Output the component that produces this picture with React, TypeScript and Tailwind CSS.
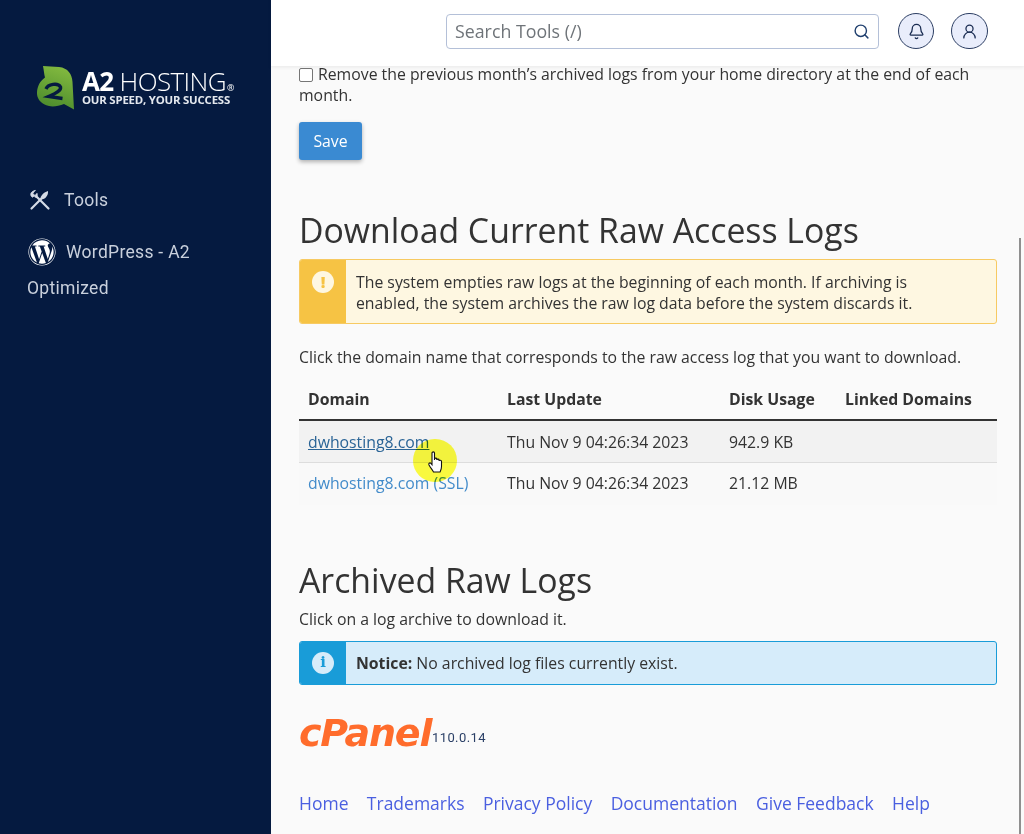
import { Bell, Search, UserRound } from 'lucide-react';
import { FaWordpress } from 'react-icons/fa';

function ToolsIcon() {
  return (
    <svg width="22" height="22" viewBox="0 0 22 22" fill="none" stroke="#d5dbe6" strokeWidth="2.200" strokeLinecap="round">
      {/* screwdriver */}
      <path d="M2.500 19.500L12 10" />
      <path d="M11.500 10.500c-.5-3 2.500-7 7.500-8.500.5 4.500-3 9-7.500 8.500z" fill="#d5dbe6" stroke="none" />
      {/* wrench */}
      <path d="M7.500 7.500L19.500 19.500" />
      <path d="M6 1.500L3.800 4.500l2.200 2-2.700 1.800C.8 6.500 1 2.500 6 1.500zM6 6.500l2-2.200c.6 1.800.3 3.400-.5 4.300L6 8z" fill="#d5dbe6" stroke="#d5dbe6" strokeWidth="0.800" strokeLinejoin="round" />
    </svg>
  );
}

function A2Mark() {
  return (
    <svg width="39" height="44" viewBox="0 0 39 44" className="shrink-0">
      <defs>
        <linearGradient id="a2g" x1="0.6" y1="0" x2="0.3" y2="1">
          <stop offset="0" stopColor="#82b93f" />
          <stop offset="1" stopColor="#4a8a2c" />
        </linearGradient>
      </defs>
      <path
        d="M6 0L22 1C31 2 35 8 35.500 16L37 43.500 27 38C22 40 16 41 12 40 4 38 -0.500 33 0 26 0.500 20 3 15 8 11.500 7 8 7 5 6 0z"
        fill="url(#a2g)"
      />
      <path d="M9 23C11 18 21 16.500 23.500 21 24.500 25 18 27.500 11.500 30.500L25.500 32.500" fill="none" stroke="#051a40" strokeWidth="3.400" />
    </svg>
  );
}

function Sidebar() {
  return (
    <aside className="w-[271px] shrink-0 bg-[#051a40] font-['Roboto',sans-serif] text-[17.500px] text-[#c9d0dc]">
      <div className="mt-[66px] ml-[37px] flex items-start gap-[6px]">
        <A2Mark />
        <div className="font-['Open_Sans',sans-serif] whitespace-nowrap text-white">
          <div className="mt-[4px] flex items-baseline text-[26px] leading-[22px] tracking-[-0.6px]">
            <span className="font-bold">A2</span>
            <span className="ml-[6px] font-light">HOSTING</span>
            <span className="ml-[1px] text-[9px] leading-none">®</span>
          </div>
          <div className="mt-[2px] text-[11.400px] leading-[11px] font-bold tracking-[-0.2px] text-[#e4e8ee]">OUR SPEED, YOUR SUCCESS</div>
        </div>
      </div>
      <div className="mt-[79px] ml-[29px] flex items-center gap-[13px] leading-[22px] tracking-[0.3px]">
        <ToolsIcon />
        <span>Tools</span>
      </div>
      <div className="mt-[27px] ml-[28px] flex items-center gap-[10px] leading-[22px] tracking-[0.3px]">
        <FaWordpress className="text-[28px] text-white" />
        <span>WordPress - A2</span>
      </div>
      <div className="mt-[11px] ml-[27px] leading-[22px] tracking-[0.3px]">Optimized</div>
    </aside>
  );
}

function Header() {
  return (
    <header className="z-10 flex h-[66px] shrink-0 items-center bg-white pb-[4px] pl-[175px] shadow-[0_1px_4px_rgba(0,0,0,0.08)]">
      <div className="flex h-[35px] w-[433px] items-center justify-between rounded-[4px] border border-[#b4c0d8] pr-[8px] pl-[8px]">
        <span className="pt-[1px] text-[17.800px] text-[#6f7479]">Search Tools (/)</span>
        <Search size={17} strokeWidth={2} className="text-[#1f3f6e]" />
      </div>
      <div className="ml-[19px] flex h-[36px] w-[36px] items-center justify-center rounded-full border border-[#2c3e63] bg-[#e9edfb]">
        <Bell size={17} strokeWidth={1.800} className="text-[#1a2c52]" />
      </div>
      <div className="ml-[17px] flex h-[36px] w-[37px] items-center justify-center rounded-full border border-[#2c3e63] bg-[#e9edfb]">
        <UserRound size={17} strokeWidth={1.800} className="text-[#1a2c52]" />
      </div>
    </header>
  );
}

function Alert({ tone, children }: { tone: 'warning' | 'info'; children: React.ReactNode }) {
  const warning = tone === 'warning';
  return (
    <div
      className={
        warning
          ? 'flex h-[65px] w-[698px] overflow-hidden rounded-[3px] border border-[#f7ca62] bg-[#fef7e1]'
          : 'flex h-[44px] w-[698px] overflow-hidden rounded-[3px] border border-[#199cd8] bg-[#d6ecfa]'
      }
    >
      <div
        className={
          warning
            ? 'flex w-[46px] shrink-0 justify-center bg-[#f6c344] pt-[11px]'
            : 'flex w-[46px] shrink-0 items-center justify-center bg-[#199cd8]'
        }
      >
        <span
          className={
            warning
              ? 'flex h-[22px] w-[22px] items-center justify-center rounded-full bg-[#fef7e1] text-[16px] font-extrabold text-[#f6c344]'
              : 'flex h-[22px] w-[22px] items-center justify-center rounded-full bg-[#d6ecfa] font-["DejaVu_Serif",serif] text-[15px] font-bold text-[#199cd8]'
          }
        >
          {warning ? '!' : 'i'}
        </span>
      </div>
      <div className={warning ? 'pt-[12px] pl-[10px] leading-[21px]' : 'self-center pt-[1px] pl-[10px] leading-[21px]'}>{children}</div>
    </div>
  );
}

function Th({ w, children }: { w: string; children?: React.ReactNode }) {
  return <th className={`${w} px-[9px] pb-[7px] text-left font-bold text-[#333]`}>{children}</th>;
}

const rows = [
  { name: 'dwhosting8.com', size: '942.9 KB', tr: 'h-[43px] border-b border-[#dddddd] bg-[#f2f2f2]', td: 'px-[9px] pt-[3px]', link: 'text-[#2a6496] underline' },
  { name: 'dwhosting8.com (SSL)', size: '21.12 MB', tr: 'h-[42px] bg-[#f9f9f9]', td: 'px-[9px]', link: 'text-[#428bca]' },
];

function LogsTable() {
  return (
    <table className="mt-[20px] w-[698px] table-fixed border-collapse">
      <thead>
        <tr className="border-b-2 border-[#333]">
          <Th w="w-[199px]">Domain</Th>
          <Th w="w-[222px]">Last Update</Th>
          <Th w="w-[116px]">Disk Usage</Th>
          <Th w="w-[161px]">Linked Domains</Th>
        </tr>
      </thead>
      <tbody>
        {rows.map((r) => (
          <tr key={r.name} className={r.tr}>
            <td className={r.td}>
              <a className={r.link}>{r.name}</a>
            </td>
            <td className={r.td}>Thu Nov 9 04:26:34 2023</td>
            <td className={r.td}>{r.size}</td>
            <td className={r.td} />
          </tr>
        ))}
      </tbody>
    </table>
  );
}

function Footer() {
  const links = ['Home', 'Trademarks', 'Privacy Policy', 'Documentation', 'Give Feedback', 'Help'];
  return (
    <>
      <div className="mt-[29px] flex items-end">
        <span className="w-[133px] font-['DejaVu_Sans',sans-serif] text-[38px] leading-[38px] font-bold tracking-[-1.200px] whitespace-nowrap text-[#ff6c2c] italic">
          cPanel
        </span>
        <span className="mb-[4px] font-['Roboto',sans-serif] text-[13px] tracking-[0.4px] text-[#2a3f66]">110.0.14</span>
      </div>
      <div className="mt-[39px] flex gap-[18.400px] text-[17.500px] leading-[24px] text-[#4a5fe0]">
        {links.map((l) => (
          <a key={l}>{l}</a>
        ))}
      </div>
    </>
  );
}

export default function App() {
  return (
    <div className="relative flex h-[834px] w-[1024px] overflow-hidden bg-[#fafafa] font-['Open_Sans',sans-serif] text-[15.800px] text-[#333]">
      <Sidebar />
      <div className="flex min-w-0 flex-1 flex-col">
        <Header />
        <main className="-mt-[2px] pl-[28px]">
          <div className="w-[698px] leading-[21px]">
            <input type="checkbox" className="mr-[5px] h-[14px] w-[14px] appearance-none rounded-[2px] border-[1.500px] border-[#767676] bg-white align-[-2px]" />
            Remove the previous month’s archived logs from your home directory at the end of each month.
          </div>
          <button className="mt-[16px] h-[38px] w-[63px] rounded-[3px] bg-[#3a8ad2] pt-[2px] text-white shadow-[0_2px_4px_rgba(0,0,0,0.3)]">
            Save
          </button>
          <h2 className="mt-[48px] text-[33.800px] leading-[44px]">Download Current Raw Access Logs</h2>
          <div className="mt-[7px]">
            <Alert tone="warning">
              The system empties raw logs at the beginning of each month. If archiving is
              <br />
              enabled, the system archives the raw log data before the system discards it.
            </Alert>
          </div>
          <p className="mt-[23px] leading-[21px]">Click the domain name that corresponds to the raw access log that you want to download.</p>
          <LogsTable />
          <h2 className="mt-[53px] text-[33.800px] leading-[44px]">Archived Raw Logs</h2>
          <p className="mt-[7px] leading-[21px]">Click on a log archive to download it.</p>
          <div className="mt-[11px]">
            <Alert tone="info">
              <b>Notice:</b> No archived log files currently exist.
            </Alert>
          </div>
          <Footer />
        </main>
      </div>
      <div className="absolute top-[238px] right-[3px] bottom-0 w-[2px] bg-[#8f8f8f]" />
      {/* recording cursor highlight */}
      <div className="absolute top-[439px] left-[413px] h-[43px] w-[44px] rounded-full bg-[#ffff40] mix-blend-multiply" />
      <svg width="18" height="24" viewBox="0 0 18 24" className="absolute top-[451px] left-[427px]">
        <path
          d="M5 2c0-1.500 2.500-1.500 2.500 0v7l0-1c0-1.200 2.300-1.200 2.300 0v1c0-1.200 2.300-1.200 2.300 0v1c0-1.200 2.400-1 2.400.5v5c0 2.500-.7 3.500-1.500 5.500H6.500c-1-2-2.500-3.500-4.500-7-.8-1.500.8-2.800 2-1.500l1 1.200z"
          fill="white"
          stroke="#111"
          strokeWidth="1.100"
        />
      </svg>
    </div>
  );
}
